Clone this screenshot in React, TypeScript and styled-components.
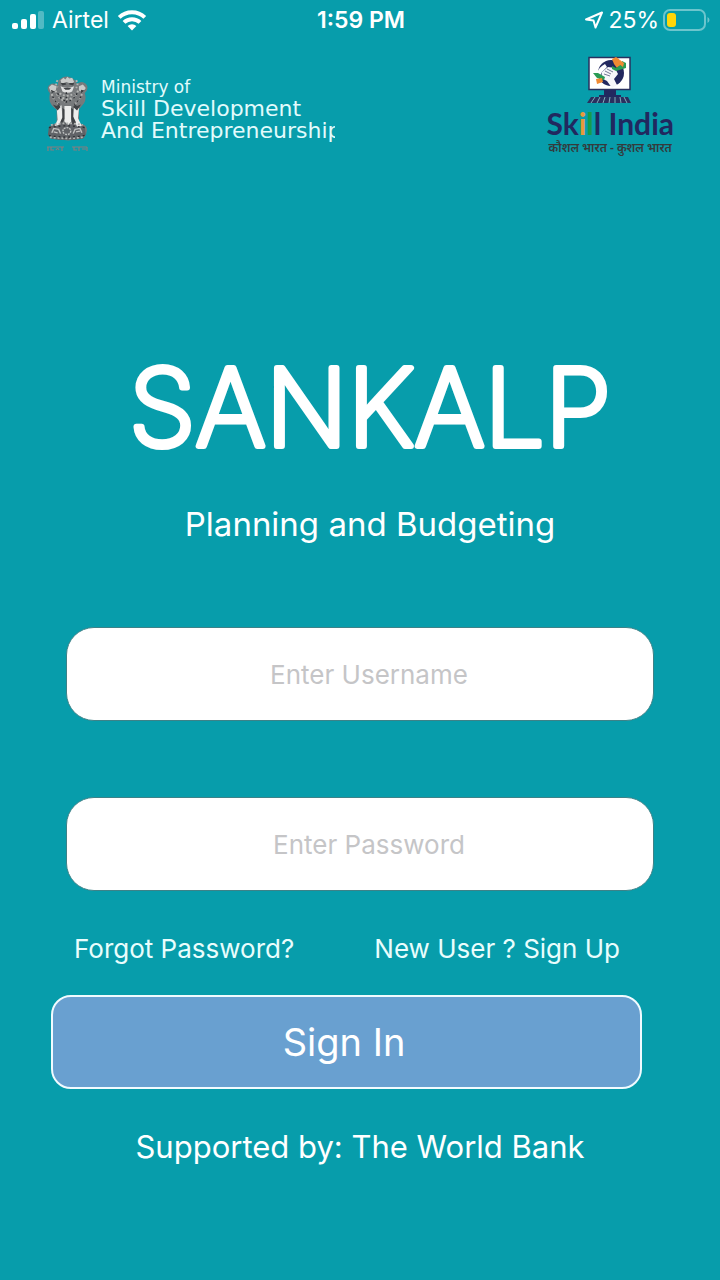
import React from "react";
import styled, { createGlobalStyle } from "styled-components";

const Global = createGlobalStyle`
  * { box-sizing: border-box; }
  html, body { margin: 0; min-height: 100%; background: #079dab; }
  body { font-family: Inter, "Liberation Sans", sans-serif; color: #fff; }
`;

const Screen = styled.div`
  min-height: 100vh;
  display: flex;
  flex-direction: column;
  background: #079dab;
`;

const StatusBar = styled.div`
  display: grid;
  grid-template-columns: 1fr auto 1fr;
  align-items: center;
  height: 40px;
  padding: 0 10px 0 12px;
  font-size: 23px;
  line-height: 28px;
`;

const StatusGroup = styled.div<{ $end?: boolean }>`
  display: flex;
  align-items: center;
  justify-content: ${(p) => (p.$end ? "flex-end" : "flex-start")};
  gap: ${(p) => (p.$end ? 4 : 8)}px;
`;

const Clock = styled.time`
  font-weight: 600;
`;

const Header = styled.header`
  display: flex;
  justify-content: space-between;
  align-items: flex-start;
  padding: 16px 46px 0;
`;

const Ministry = styled.div`
  display: flex;
  gap: 12px;
  width: 289px;
  padding-top: 17px;
  overflow: hidden;
  font-family: "DejaVu Sans", sans-serif;
  color: #e2fbfc;
  white-space: nowrap;
  svg { flex: none; }
`;

const MinistryText = styled.div`
  padding-top: 3px;
`;

const MinistryLine = styled.div<{ $small?: boolean }>`
  font-size: ${(p) => (p.$small ? 17 : 22)}px;
  line-height: 22px;
`;

const SkillIndia = styled.div`
  display: flex;
  flex-direction: column;
  align-items: center;
`;

const SkillName = styled.div`
  font-family: Lato, sans-serif;
  font-weight: 700;
  font-size: 30px;
  line-height: 34px;
  color: #21285f;
`;

const Tint = styled.span<{ $color: string }>`
  color: ${(p) => p.$color};
`;

const Motto = styled.div`
  font-family: "Noto Sans", "Noto Sans Devanagari", sans-serif;
  font-weight: 600;
  font-size: 12px;
  line-height: 16px;
  color: #343a3c;
  white-space: nowrap;
`;

const Hero = styled.section`
  display: flex;
  flex-direction: column;
  align-items: center;
  padding: 178px 0 0 20px;
`;

const Brand = styled.h1`
  margin: 0;
  line-height: 0;
`;

const Wordmark = styled.text`
  font-family: Inter, sans-serif;
  font-size: 107px;
  font-weight: 200;
  fill: #fff;
  stroke: #fff;
  stroke-width: 6px;
  stroke-linejoin: round;
`;

const Tagline = styled.p`
  margin: 28px 0 0;
  font-size: 33px;
  line-height: 44px;
`;

const Form = styled.form`
  display: flex;
  flex-direction: column;
  padding: 81px 66px 0;
`;

const Field = styled.input`
  height: 94px;
  margin-bottom: 76px;
  padding: 0 0 0 18px;
  border: 1px solid #3d8288;
  border-radius: 28px;
  background: #fff;
  color: #333;
  font: 400 26px/32px Inter, sans-serif;
  text-align: center;
  outline: none;
  width: 100%;
  &::placeholder { color: #c5c5c7; opacity: 1; }
  & + & { margin-bottom: 42px; }
`;

const Links = styled.div`
  display: flex;
  justify-content: space-between;
  padding: 0 34px 0 8px;
`;

const TextLink = styled.a`
  color: #e9fdfd;
  font-size: 26px;
  line-height: 32px;
  text-decoration: none;
`;

const SignIn = styled.button`
  height: 94px;
  margin: 30px 12px 0 -15px;
  padding: 0 5px 0 0;
  border: 2px solid #f0fbff;
  border-radius: 20px;
  background: #69a0d0;
  color: #fff;
  font: 400 38px/48px Inter, sans-serif;
`;

const Support = styled.footer`
  padding: 38px 0 60px;
  text-align: center;
  font-size: 31px;
  line-height: 40px;
`;

const Signal = () => (
  <svg width="32" height="20" viewBox="0 0 32 20" fill="#fff" aria-hidden="true">
    <rect x="0" y="13" width="6" height="6" rx="2" />
    <rect x="9" y="9" width="6" height="10" rx="2" />
    <rect x="18" y="4" width="6" height="15" rx="2" />
    <rect x="26" y="1" width="6" height="18" rx="2" opacity=".3" />
  </svg>
);

const Wifi = () => (
  <svg width="30" height="22" viewBox="0 0 30 22" aria-hidden="true">
    <g fill="none" stroke="#fff" strokeWidth="4">
      <path d="M2.2 8.4a18.5 18.5 0 0 1 25.6 0" />
      <path d="M7 13.4a11.6 11.6 0 0 1 16 0" />
    </g>
    <path d="M15 21.5l-4.4-4.4a6.4 6.4 0 0 1 8.8 0z" fill="#fff" />
  </svg>
);

const Location = () => (
  <svg width="20" height="20" viewBox="0 0 20 20" aria-hidden="true">
    <path d="M2 9.5L18 2.500 11.500 17.500 9.500 10.500z" fill="none" stroke="#fff" strokeWidth="2" strokeLinejoin="round" />
  </svg>
);

const Battery = () => (
  <svg width="47" height="24" viewBox="0 0 47 24" aria-hidden="true">
    <rect x="1" y="2" width="41" height="20" rx="6" fill="none" stroke="#6cc5cd" strokeWidth="2" />
    <rect x="4" y="5" width="9" height="14" rx="3" fill="#ffd60a" />
    <path d="M44.500 9v6q2-1 2-3t-2-3z" fill="#6cc5cd" />
  </svg>
);

const Emblem = () => (
  <svg width="43" height="80" viewBox="0 0 43 80" role="img" aria-label="State emblem">
    <g transform="translate(0 3) scale(.97 .86)">
      <path fill="#777a7c" d="M13 5q8-9 17 0l2 4q5-4 9 0 3 3 1 8l-2 3q2 7-1 12l-5 7v16q7 1 8 6 1 5-3 11l-16 3-15-2q-5-3-5-10 1-6 8-8V39q-5-3-7-9-1-5 0-10-3-3-2-7 2-5 7-4l3 2z" />
      <path fill="#606367" d="M12 54h20l8 5 1 9-3 5q-17 3-33 0l-3-5 1-9z" />
      <g fill="#c9cbca">
        <path d="M15 5l3-3 2 2 2-3 2 2 3-1 2 5-3 2-5-2-5 2z" />
        <path d="M3 13l3-3 5 2-1 5-5 2zM34 12l4-2 3 4-3 5-4-2z" />
        <path d="M15 12q7 4 14 0l-2 6q-5 3-10 0z" fill="#e1e2e2" />
        <path d="M11 37l5-3 1 15-4 8-4 1 3-7zM19 35h7v18l-3 4-4-4zM29 35l5 2-1 12 4 9-5 1-4-11z" fill="#ecedec" />
      </g>
      <path fill="#3f4245" d="M15 8h5l1 2-4 1zM24 8h5l-1 3-4-1zM18 14h8l-2 2h-4zM5 16l4 2-3 2zM36 16l4 1-4 3zM17 37l2 2v11l-2 5-2-2 2-5zM26 37l2 2v8l3 7-4 2-1-6zM7 33l4 2 2-2 2 3-3 4zM36 33l-4 2-2-2-2 3 4 4z" />
      <g fill="none" stroke="#b3b5b3" strokeWidth="2" strokeDasharray="2 2">
        <path d="M6 21q2 9 9 12M10 17q2 9 10 13M37 21q-2 8-8 12M33 17q-3 9-9 12M14 20q8 6 15 0M17 25q5 4 10 0" />
        <path d="M4 71q17 3 35 0M5 57q17-4 33 0M12 5q-3 4 0 8M31 5q3 4 0 9" />
      </g>
      <g fill="none" stroke="#2e3135" strokeWidth="1.500" strokeDasharray="2 3">
        <path d="M7 24q2 6 7 9M12 20q3 7 8 9M36 24q-3 6-7 9M32 20q-3 7-8 9M21 19v12M3 60q18-4 37 0M3 69q18 4 37 0" />
      </g>
      <g fill="none" stroke="#c1c3c2" strokeWidth="1.500">
        <circle cx="21.500" cy="64" r="4" strokeDasharray="2 1" />
        <path d="M6 66l2-5 5 1 2 5M28 67l2-5 5-1 2 5M8 65l4 1M31 65l4-1" />
      </g>
    </g>
    <g fill="none" stroke="#857f80" strokeWidth="1.200">
      <path d="M1 74h17M26 74h15" />
      <path d="M2 74v4M5 74v3h3M10 77q2-3 3 0M16 74v4M28 74v3h3M33 74v4M36 76h4M41 74v4" />
    </g>
  </svg>
);

const Computer = () => (
  <svg width="46" height="50" viewBox="0 0 46 50" role="img" aria-label="Skill India logo">
    <rect x="2" y="1.500" width="41" height="32" fill="#fff" stroke="#29305f" strokeWidth="1.500" />
    <circle cx="24" cy="17" r="13" fill="#22285f" />
    <path d="M10 17q2-6 8-9l2 3-5 5-2 4z" fill="#fff" />
    <path d="M15 16l6-5 7 1 3 6-4 5 3 6-5 3-5-7-6-3z" fill="#f7f7fa" />
    <path d="M18 15l6 3M20 13l6 3M17 18l6 2" stroke="#777b99" strokeWidth="1" />
    <path d="M25 3l4-2 3 2 3 5-5 4-3-4z" fill="#f08a32" />
    <path d="M25 10l4 2 6-4V5l4 2v5l-10 3-4-2z" fill="#2a9b54" />
    <path d="M33 4l4 3-1 4-4-3z" fill="#f08a32" />
    <path d="M6 17l5 0 7 4-1 3-7-2z" fill="#2a9b54" />
    <path d="M9 23l6-1 1 4-6 2z" fill="#f08a32" />
    <path d="M17 34h12v5h5v2H12v-2h5z" fill="#22285f" />
    <path d="M4 41h37l3 6H0z" fill="#29305f" />
    <path d="M8 41l-4 6M13 41l-3 6M18 41l-2 6M23 41l-1 6M28 41v6M33 41l1 6M37 41l3 6" stroke="#7faebd" strokeWidth="1" />
  </svg>
);

export default function App() {
  return (
    <Screen>
      <Global />
      <StatusBar>
        <StatusGroup>
          <Signal />
          <span>Airtel</span>
          <Wifi />
        </StatusGroup>
        <Clock>1:59 PM</Clock>
        <StatusGroup $end>
          <Location />
          <span>25%</span>
          <Battery />
        </StatusGroup>
      </StatusBar>
      <Header>
        <Ministry>
          <Emblem />
          <MinistryText>
            <MinistryLine $small>Ministry of</MinistryLine>
            <MinistryLine>Skill Development</MinistryLine>
            <MinistryLine>And Entrepreneurship</MinistryLine>
          </MinistryText>
        </Ministry>
        <SkillIndia>
          <Computer />
          <SkillName>
            Sk<Tint $color="#e89a3c">i</Tint><Tint $color="#159a4c">l</Tint>l India
          </SkillName>
          <Motto lang="hi">कौशल भारत - कुशल भारत</Motto>
        </SkillIndia>
      </Header>
      <main>
        <Hero>
          <Brand>
            <svg width="540" height="140" viewBox="0 0 540 140">
              <Wordmark x="270" y="112" textAnchor="middle">SANKALP</Wordmark>
            </svg>
          </Brand>
          <Tagline>Planning and Budgeting</Tagline>
        </Hero>
        <Form onSubmit={(e) => e.preventDefault()}>
          <Field type="text" placeholder="Enter Username" aria-label="Username" />
          <Field type="password" placeholder="Enter Password" aria-label="Password" />
          <Links>
            <TextLink href="#forgot">Forgot Password?</TextLink>
            <TextLink href="#signup">New User ? Sign Up</TextLink>
          </Links>
          <SignIn type="submit">Sign In</SignIn>
        </Form>
      </main>
      <Support>Supported by: The World Bank</Support>
    </Screen>
  );
}
